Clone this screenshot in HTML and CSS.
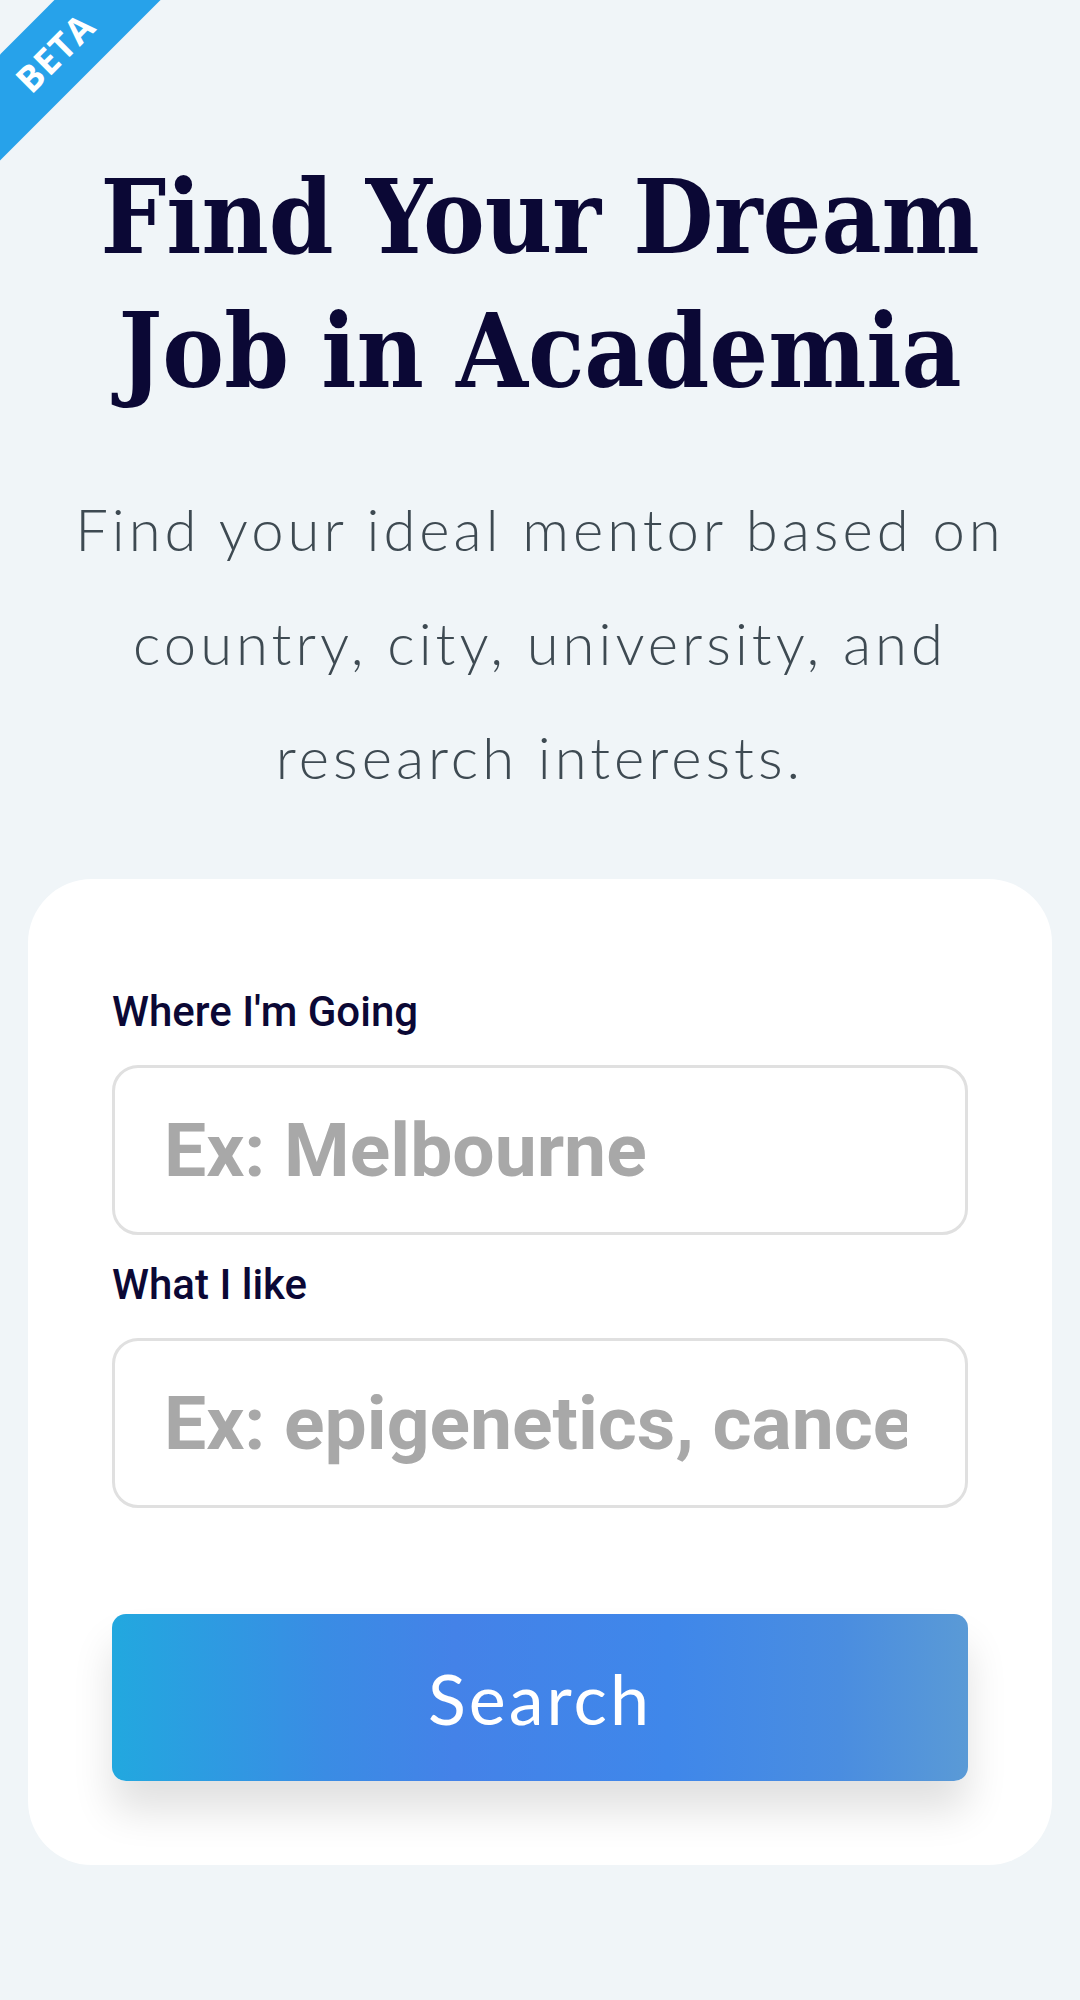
FILE: index.html
```html
<!DOCTYPE html>
<html lang="en">
<head>
<meta charset="utf-8">
<title>Find Your Dream Job in Academia</title>
<link rel="stylesheet" href="styles.css">
</head>
<body>
<div class="ribbon"><span>BETA</span></div>
<main class="page">
  <header class="hero">
    <h1 class="title">Find Your Dream<br>Job in Academia</h1>
    <p class="subtitle">Find your ideal mentor based on<br>country, city, university, and<br>research interests.</p>
  </header>
  <form class="card" onsubmit="return false;">
    <label class="label" for="where">Where I'm Going</label>
    <input class="field" id="where" type="text" placeholder="Ex: Melbourne">
    <label class="label" for="like">What I like</label>
    <input class="field" id="like" type="text" placeholder="Ex: epigenetics, cancer">
    <button class="search" type="submit">Search</button>
  </form>
</main>
</body>
</html>
```
FILE: styles.css
```css
html, body {
  margin: 0;
  padding: 0;
}
body {
  background: #f0f5f8;
  width: 1080px;
  min-height: 2000px;
  position: relative;
  overflow: hidden;
  font-family: "Roboto", "Liberation Sans", sans-serif;
}
.ribbon {
  position: absolute;
  left: -95px;
  top: 15px;
  width: 300px;
  height: 75px;
  background: #27a2ea;
  transform: rotate(-45deg);
  display: flex;
  align-items: center;
  justify-content: center;
}
.ribbon span {
  color: #fff;
  font-family: "Open Sans", "Noto Sans", sans-serif;
  font-weight: 700;
  font-size: 36px;
  letter-spacing: 1px;
}
.page {
  display: flex;
  flex-direction: column;
  align-items: center;
}
.hero {
  display: flex;
  flex-direction: column;
  align-items: center;
  padding-top: 150px;
}
.title {
  margin: 0;
  font-family: "DejaVu Serif Condensed", "DejaVu Serif", "Liberation Serif", serif;
  font-stretch: condensed;
  font-weight: 700;
  font-size: 103px;
  line-height: 134px;
  color: #0b0835;
  text-align: center;
}
.subtitle {
  margin: 54px 0 0;
  font-family: "Lato", "Open Sans", sans-serif;
  font-weight: 300;
  font-size: 58px;
  line-height: 114px;
  letter-spacing: 4px;
  color: #3e4a52;
  text-align: center;
}
.card {
  box-sizing: border-box;
  width: 1024px;
  margin-top: 65px;
  background: #fff;
  border-radius: 64px;
  padding: 108px 84px 84px;
  display: flex;
  flex-direction: column;
}
.label {
  font-family: "Roboto", sans-serif;
  font-weight: 500;
  font-size: 42px;
  line-height: 50px;
  color: #0b0835;
  margin-bottom: 28px;
}
.field {
  box-sizing: border-box;
  width: 100%;
  height: 170px;
  border: 3px solid #e0e0e0;
  border-radius: 26px;
  padding: 0 58px 0 49px;
  font-family: "Roboto", sans-serif;
  font-weight: 700;
  font-size: 75px;
  color: #333;
  background: #fff;
  outline: none;
  margin-bottom: 25px;
}
.field::placeholder {
  color: #a8a8a8;
}
.field:last-of-type {
  margin-bottom: 0;
}
.search {
  margin-top: 106px;
  height: 167px;
  border: none;
  border-radius: 14px;
  background: linear-gradient(90deg, #22a8df 0%, #3a8ce4 25%, #4482e8 40%, #3f87ea 65%, #4a8de0 85%, #5a9ad6 100%);
  box-shadow: 0 30px 40px rgba(0, 0, 0, 0.12);
  color: #fff;
  font-family: "Lato", "Open Sans", sans-serif;
  font-weight: 400;
  font-size: 70px;
  letter-spacing: 3px;
}
```
